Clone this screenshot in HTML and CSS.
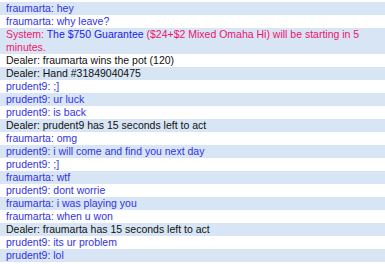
FILE: index.html
```html
<!DOCTYPE html>
<html lang="en">
<head>
    <meta charset="UTF-8">
    <title>Chat</title>
    <link rel="stylesheet" href="styles.css">
</head>
<body>
    <div class="chat">
        <div class="line alt player">fraumarta: hey</div>
        <div class="line player">fraumarta: why leave?</div>
        <div class="line alt system">System: <span class="hl">The $750 Guarantee</span> ($24+$2 Mixed Omaha Hi) will be starting in 5 minutes.</div>
        <div class="line dealer">Dealer: fraumarta wins the pot (120)</div>
        <div class="line alt dealer">Dealer: Hand #31849040475</div>
        <div class="line player">prudent9: ;]</div>
        <div class="line alt player">prudent9: ur luck</div>
        <div class="line player">prudent9: is back</div>
        <div class="line alt dealer">Dealer: prudent9 has 15 seconds left to act</div>
        <div class="line player">fraumarta: omg</div>
        <div class="line alt player">prudent9: i will come and find you next day</div>
        <div class="line player">prudent9: ;]</div>
        <div class="line alt player">fraumarta: wtf</div>
        <div class="line player">prudent9: dont worrie</div>
        <div class="line alt player">fraumarta: i was playing you</div>
        <div class="line player">fraumarta: when u won</div>
        <div class="line alt dealer">Dealer: fraumarta has 15 seconds left to act</div>
        <div class="line player">prudent9: its ur problem</div>
        <div class="line alt player">prudent9: lol</div>
    </div>
</body>
</html>
```

FILE: styles.css
```css
body {
    margin: 0;
    padding: 0;
    background-color: #ffffff;
    font-family: "Liberation Sans", Arial, sans-serif;
    font-size: 10.5px;
}
.chat {
    padding-top: 2px;
}
.line {
    line-height: 13px;
    padding: 0 6px;
    background-color: #ffffff;
}
.line.alt {
    background-color: #d7e5f5;
}
.player {
    color: #3232e6;
}
.dealer {
    color: #111111;
}
.system {
    color: #f0146e;
}
.hl {
    color: #1a1aee;
}
```
